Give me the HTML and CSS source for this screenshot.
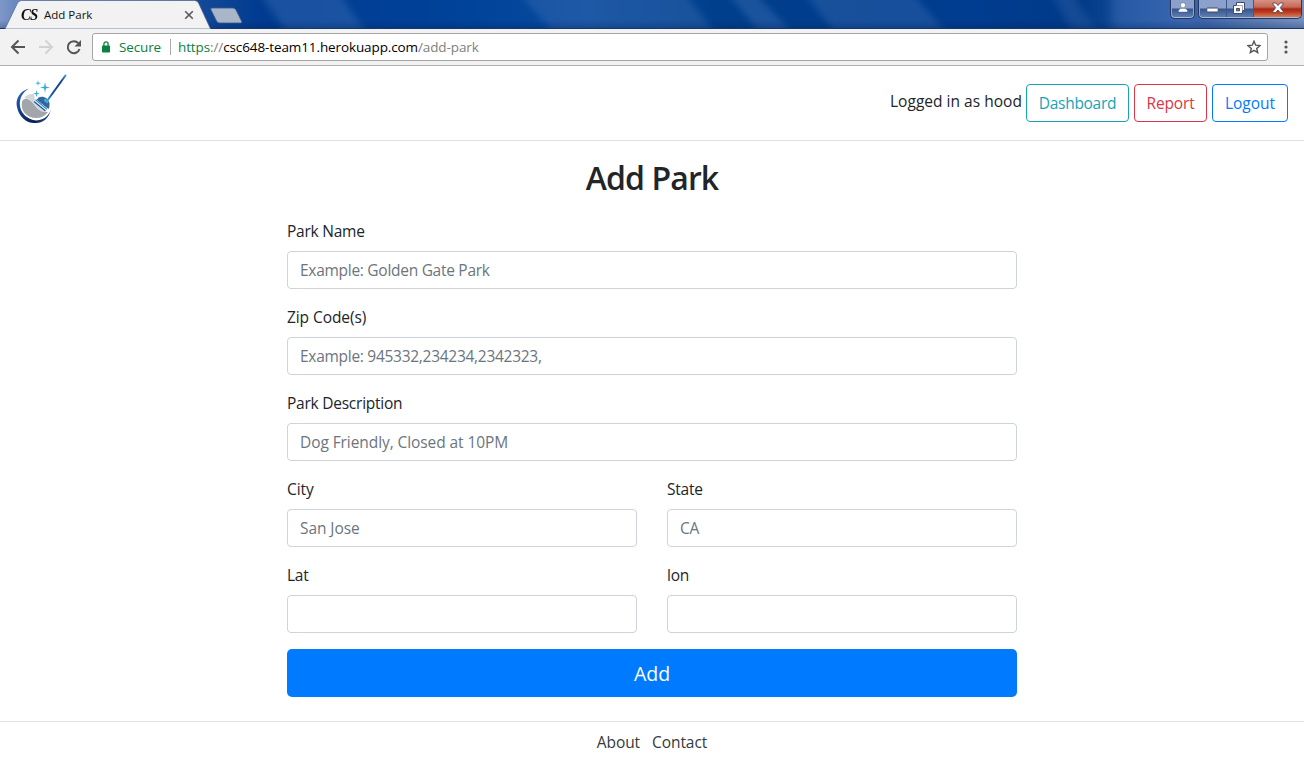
FILE: index.html
```html
<!DOCTYPE html>
<html lang="en">
<head>
<meta charset="utf-8">
<title>Add Park</title>
<link rel="stylesheet" href="styles.css">
</head>
<body>
<header class="titlebar">
  <svg class="glass" width="1304" height="29" viewBox="0 0 1304 29" aria-hidden="true">
    <defs>
      <linearGradient id="base" x1="0" x2="1304" y1="0" y2="0" gradientUnits="userSpaceOnUse">
        <stop offset="0" stop-color="#7d97c7"/><stop offset=".012" stop-color="#6c88c0"/><stop offset=".15" stop-color="#174a98"/>
        <stop offset=".2" stop-color="#003b90"/><stop offset=".36" stop-color="#00439a"/><stop offset=".45" stop-color="#084a9c"/><stop offset=".55" stop-color="#003f8c"/>
        <stop offset=".75" stop-color="#003c8f"/><stop offset=".83" stop-color="#003a88"/><stop offset=".865" stop-color="#174c9a"/><stop offset=".9" stop-color="#2c58a5"/><stop offset="1" stop-color="#7590bd"/>
      </linearGradient>
      <linearGradient id="shade" x1="0" x2="0" y1="0" y2="1"><stop offset=".7" stop-color="#002050" stop-opacity="0"/><stop offset="1" stop-color="#002050" stop-opacity=".3"/></linearGradient>
      <filter id="soft" x="-20%" y="-20%" width="140%" height="140%"><feGaussianBlur stdDeviation="4 0"/></filter>
    </defs>
    <rect width="1304" height="29" fill="url(#base)"/>
    <g filter="url(#soft)" fill="#4b79bd">
      <path opacity=".35" d="M264 0h80l20 29h-80z"/><path opacity=".3" d="M525 0h165l22 29H550z"/>
      <path opacity=".35" d="M733 0h28l28 29h-32z"/><path opacity=".3" d="M810 0h108l25 29H832z"/>
      <path opacity=".25" d="M1055 0h22l18 29h-24z"/>
      <path opacity=".35" d="M1112 0h60l30 29h-90z"/>
    </g>
    <rect width="1304" height="29" fill="url(#shade)"/>
    <path d="M0 28.500h1304" stroke="#17366e"/>
    <path d="M5 29 17.500 3q1.300-2.500 4-2.500h173q3 0 4 2.500L210.500 29z" fill="#f2f2f2" stroke="#4d6594" stroke-width=".7"/>
    <path d="M212 8h21q2 0 3 2l5.500 11q1 2-1 2h-21q-2 0-3-2l-5.500-11q-1-2 1-2z" fill="#a9b5c9" stroke="#37558f" stroke-width=".8"/>
  </svg>
  <div class="tab">
    <span class="favicon">CS</span><span class="tab-title">Add Park</span>
    <svg class="tab-close" width="10" height="10" viewBox="0 0 10 10"><path d="m1.200 1.200 7.600 7.600m0-7.600-7.600 7.600" stroke="#5a5a5a" stroke-width="1.600"/></svg>
  </div>
  <div class="caption">
    <div class="cap-box user"><svg width="12" height="11" viewBox="0 0 12 11"><path d="M6 .7c1.700 0 2.500 1.100 2.500 2.500S7.500 5.800 6 5.800 3.500 4.600 3.500 3.200 4.300.7 6 .7zM1.500 10V8.300C2.800 6.600 4.500 6.300 6 6.300s3.200.3 4.500 2V10z" fill="#fff" stroke="#334b78" stroke-width=".4"/></svg></div>
    <div class="cap-box group">
      <span class="cap min"><svg width="13" height="6" viewBox="0 0 13 6"><rect x=".8" y="1" width="11.400" height="4" rx=".7" fill="#fff" stroke="#434b62"/></svg></span>
      <span class="cap restore"><svg width="12" height="12" viewBox="0 0 12 12"><path d="M3.500.5h8v8h-2v3h-9v-8h3z" fill="#fff" stroke="#434b62"/><path d="M3.500 3.500h6v5" fill="none" stroke="#8790a5" stroke-width=".8"/><path d="M3.500 6.500h3v2.300h-3z" fill="#6c83ad" stroke="#434b62"/></svg></span>
      <span class="cap close"><svg width="14" height="12" viewBox="0 0 14 12"><path d="M1.800 1h3L7 3.500 9.200 1h3v1L9.300 5.700l2.900 3.900v1h-3L7 8 4.800 10.600h-3v-1l2.900-3.900L1.800 2z" fill="#fff" stroke="#5b4650" stroke-width=".9"/></svg></span>
    </div>
  </div>
</header>
<div class="toolbar">
  <svg class="nav-icons" width="92" height="36" viewBox="0 0 92 36" fill="none" stroke-width="2">
    <path d="M25 18H12m6.500-6.500L12 18l6.500 6.500" stroke="#555"/>
    <path d="M39 18h13m-6.500-6.500L52 18l-6.500 6.500" stroke="#d2d2d2"/>
    <path d="M78.300 14.200A6 6 0 1 0 79.500 20" stroke="#555"/><path d="M81 11v6.500h-6.500z" fill="#555"/>
  </svg>
  <div class="omnibox">
    <svg class="lock" width="8" height="12" viewBox="0 0 8 12"><rect y="4.500" width="8" height="7" rx=".8" fill="#0b8043"/><path d="M1.900 5V3a2.100 2.100 0 0 1 4.200 0v2" fill="none" stroke="#0b8043" stroke-width="1.300"/></svg>
    <span class="secure">Secure</span><span class="divider"></span>
    <span class="url"><span class="scheme">https</span><span class="muted">://</span>csc648-team11.herokuapp.com<span class="muted">/add-park</span></span>
    <svg class="star" width="14" height="14" viewBox="0 0 14 14"><path d="m7 1.200 1.700 4 4.300.4-3.300 2.800 1 4.200L7 10.400l-3.700 2.200 1-4.200L1 5.600l4.300-.4z" fill="none" stroke="#555" stroke-width="1.400"/></svg>
  </div>
  <svg class="menu" width="4" height="14" viewBox="0 0 4 14" fill="#555"><circle cx="2" cy="2" r="1.600"/><circle cx="2" cy="7" r="1.600"/><circle cx="2" cy="12" r="1.600"/></svg>
</div>
<nav class="navbar">
  <svg class="logo" width="54" height="54" viewBox="0 0 54 54">
    <defs>
      <linearGradient id="ring" x1="0" x2="1" y1="0" y2="1"><stop stop-color="#2a70c4"/><stop offset=".45" stop-color="#10357f"/><stop offset=".75" stop-color="#0c1d50"/><stop offset="1" stop-color="#2779cc"/></linearGradient>
      <linearGradient id="stick" x1="1" x2="0" y1="0" y2="1"><stop stop-color="#3493dc"/><stop offset=".25" stop-color="#123c92"/><stop offset=".7" stop-color="#174ba0"/><stop offset="1" stop-color="#31a9df"/></linearGradient>
    </defs>
    <path d="M14 15.500C5 18 0 26 2 34c2 10 10 17 19 16 8 0 13-6 15-13-3 7-9 10.500-15 10.500C13 46.500 6 41 5 33c-1-8 3-14 9-17.500z" fill="url(#ring)"/>
    <path d="M7 28.500C9 24 14 25 18 30c4 6 8 9 15 9-3 4-7 6-12 6C12 45 5 38 7 28.500z" fill="#a2a5a9"/>
    <path d="M9 25c2-3 6-4.500 10-4l1 6 11 10.500q0 2-2 1.500c-5-1-7-4-10-8-3-4-6-6-10-6z" fill="#d3d7da"/>
    <path d="M23.500 24.500c5-2 10 1 11 6 0 2 0 4-1 5.500L21.500 27z" fill="#37649c"/>
    <path d="m19.500 27.500 12 10" stroke="#fff" stroke-width="4"/>
    <path d="m19 28.500 11.500 9.500" stroke="#1d5aa5" stroke-width="1.500"/>
    <path d="m20.500 26.800 11.500 9.500" stroke="#2b8fd0" stroke-width="1.200"/>
    <path d="m29.500 26.500 3.500 3" stroke="#3cb4df" stroke-width="2.500"/>
    <path d="M32 28 50.500 2.500" stroke="url(#stick)" stroke-width="2" stroke-linecap="round"/>
    <g fill="#38a9dc"><path d="m30 9 .9 4.600 4.100.9-4.100.9L30 20l-.9-4.600-4.100-.9 4.100-.9z"/><path d="m23 7 .5 2.600 2.500.6-2.500.6L23 13.500l-.5-2.700-2.500-.6 2.500-.6z"/><path d="m21.500 17 .7 3 2.800.6-2.800.7-.7 2.900-.7-2.900-2.800-.7 2.800-.6z"/></g>
  </svg>
  <div class="account">
    <span class="logged">Logged in as hood</span>
    <a class="btn info"><span>Dashboard</span></a>
    <a class="btn danger"><span>Report</span></a>
    <a class="btn primary"><span>Logout</span></a>
  </div>
</nav>
<main class="form">
  <h2>Add Park</h2>
  <div class="field"><label for="name">Park Name</label><input id="name" placeholder="Example: Golden Gate Park"></div>
  <div class="field"><label for="zip" class="loose">Zip Code(s)</label><input id="zip" placeholder="Example: 945332,234234,2342323,"></div>
  <div class="field"><label for="desc">Park Description</label><input id="desc" class="wide" placeholder="Dog Friendly, Closed at 10PM"></div>
  <div class="row">
    <div class="field"><label for="city" class="loose">City</label><input id="city" class="wide" placeholder="San Jose"></div>
    <div class="field"><label for="state">State</label><input id="state" placeholder="CA"></div>
  </div>
  <div class="row">
    <div class="field"><label for="lat">Lat</label><input id="lat"></div>
    <div class="field"><label for="lon">lon</label><input id="lon"></div>
  </div>
  <button class="submit">Add</button>
</main>
<footer class="footer"><a>About</a><a>Contact</a></footer>
</body>
</html>
```
FILE: styles.css
```css
* { box-sizing: border-box; }
body { margin: 0; width: 1304px; height: 768px; overflow: hidden; background: #fff; color: #212529; font: 400 15.5px/24px "Open Sans", "Noto Sans", sans-serif; letter-spacing: -.24px; }
svg { display: block; flex: none; }

.titlebar { position: relative; display: flex; justify-content: space-between; height: 29px; letter-spacing: 0; }
.glass { position: absolute; inset: 0; }
.tab { position: relative; display: flex; align-items: center; width: 210px; height: 29px; padding: 1px 16px 0 21px; color: #111; font-size: 11.5px; }
.favicon { width: 23px; font: italic 700 17px/20px "Liberation Serif", serif; letter-spacing: -1px; transform: scaleX(.87); transform-origin: left; }
.tab-title { flex: 1; white-space: nowrap; }
.caption { position: relative; display: flex; gap: 3px; padding-right: 2px; height: 19px; }
.cap-box { display: flex; height: 19px; border: 1px solid #26375f; border-top: 0; border-radius: 0 0 5px 5px; box-shadow: inset 0 -1px 0 #a9bbdb, inset 1px 0 0 #8fa5ce, inset -1px 0 0 #8fa5ce; background: linear-gradient(#8ba1cb 0 8px, #35558f 9px, #6482b5); overflow: hidden; }
.user { width: 25px; padding: 2px 0 0 6px; }
.group { width: 104px; }
.cap { display: flex; justify-content: center; border-right: 1px solid #40588a; height: 17px; }
.min { width: 28px; padding-top: 7px; }
.restore { width: 27px; padding: 2px 2px 0 0; }
.close { width: 47px; padding-top: 2px; border: 0; background: linear-gradient(#d69283 0, #c56a58 7px, #a92613 9px, #b83b22 12px, #d67b55); }

.toolbar { display: flex; align-items: center; height: 37px; background: #f2f2f2; border-bottom: 1px solid #b3b1b3; }
.omnibox { display: flex; align-items: center; width: 1176px; height: 28px; padding: 0 6px 0 9px; background: #fff; border: 1px solid #a5a5a5; border-radius: 3px; font-size: 13.5px; color: #000; }
.secure { width: 51px; margin-left: 9px; color: #0b8043; letter-spacing: -.15px; }
.divider { width: 1px; height: 16px; background: #aaa; margin-right: 7px; }
.url { flex: 1; white-space: nowrap; letter-spacing: -.11px; }
.scheme { color: #0b8043; }
.muted { color: #808080; }
.menu { margin-left: 16px; }

.navbar { display: flex; justify-content: space-between; height: 75px; padding: 7px 16px 0 15px; border-bottom: 1px solid #dee2e6; }
.account { display: flex; gap: 5px; padding-top: 11px; }
.logged { width: 131px; margin-top: 5px; white-space: nowrap; letter-spacing: .02px; }
.btn { display: flex; justify-content: center; height: 38px; padding-top: 6px; border: 1px solid; border-radius: 4px; }
.info { width: 103px; color: #17a2b8; letter-spacing: -.3px; }
.danger { width: 73px; color: #dc3545; letter-spacing: -.15px; }
.primary { width: 76px; color: #007bff; letter-spacing: 0; }

.form { width: 730px; margin: 0 auto; padding-top: 18px; }
h2 { margin: 0 0 22px; text-align: center; font: 600 32px/38px "Open Sans", sans-serif; letter-spacing: -.9px; }
.field { flex: 1; display: flex; flex-direction: column; gap: 8px; margin-bottom: 16px; }
.row { display: flex; gap: 30px; }
label { height: 24px; letter-spacing: -.24px; }
label.loose { letter-spacing: -.08px; }
input { width: 100%; height: 38px; padding: 6px 12px; border: 1px solid #ced4da; border-radius: 4px; font: inherit; letter-spacing: -.28px; background: #fff; }
input.wide { letter-spacing: -.08px; }
input::placeholder { color: #6c757d; opacity: 1; }
.submit { display: block; width: 100%; height: 48px; padding: 0; border: 0; border-radius: 5px; background: #007bff; color: #fff; font: 400 19.5px/49px "Open Sans", sans-serif; }
.footer { display: flex; justify-content: center; gap: 12px; margin-top: 24px; padding-top: 8px; border-top: 1px solid #dee2e6; color: #343a40; letter-spacing: -.08px; }
```
